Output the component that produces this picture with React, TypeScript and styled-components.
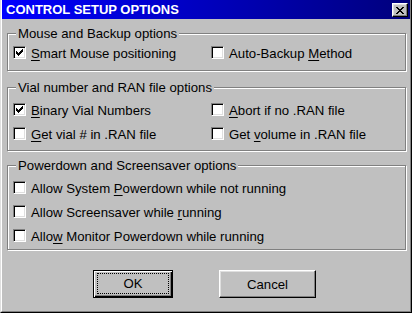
import React from 'react';
import styled, { createGlobalStyle, css } from 'styled-components';

const GlobalStyle = createGlobalStyle`
    html, body {
        margin: 0;
        padding: 0;
        background: #c0c0c0;
    }
    body {
        font-family: "Liberation Sans", Arial, sans-serif;
        font-size: 13.2px;
        color: #000;
    }
`;

const Window = styled.div`
    width: 412px;
    height: 313px;
    box-sizing: border-box;
    background: #c0c0c0;
    border-left: 1px solid #dfdfdf;
    border-right: 1px solid #000;
    border-bottom: 1px solid #000;
`;

const WindowInner = styled.div`
    height: 100%;
    box-sizing: border-box;
    border-left: 1px solid #fff;
    border-right: 1px solid #808080;
    border-bottom: 1px solid #808080;
    display: flex;
    flex-direction: column;
`;

const TitleBar = styled.div`
    height: 19px;
    flex: none;
    display: flex;
    align-items: flex-start;
    justify-content: space-between;
    padding-left: 4px;
    background: linear-gradient(to right, #0000ff, #00007c);
`;

const TitleText = styled.div`
    color: #fff;
    font-weight: bold;
    font-size: 13px;
    line-height: 19px;
`;

const CloseButton = styled.button`
    width: 16px;
    height: 14px;
    margin: 3px 2px 0 0;
    padding: 0;
    box-sizing: border-box;
    background: #c0c0c0;
    border: 1px solid;
    border-color: #fff #000 #000 #fff;
    box-shadow: inset -1px -1px #808080, inset 1px 1px #dfdfdf;
    display: flex;
    align-items: center;
    justify-content: center;

    svg {
        display: block;
    }
`;

const Body = styled.div`
    flex: 1;
    padding: 0 4px 0 5px;
    display: flex;
    flex-direction: column;
`;

const GroupBox = styled.div<{ $top: number }>`
    position: relative;
    margin-top: ${p => p.$top}px;
    border: 1px solid #808080;
    box-shadow: inset 1px 1px #fff, 1px 1px #fff;
`;

const GroupLabel = styled.span`
    position: absolute;
    top: -8px;
    left: 8px;
    padding: 0 2px;
    line-height: 15px;
    background: #c0c0c0;
`;

const GroupBody = styled.div<{ $top: number; $bottom: number }>`
    padding: ${p => p.$top}px 0 ${p => p.$bottom}px 5px;
    display: grid;
    grid-template-columns: 198px 1fr;
    row-gap: 9px;
`;

const SingleColumn = styled(GroupBody)`
    grid-template-columns: 1fr;
`;

const CheckRow = styled.label`
    display: flex;
    align-items: flex-start;
    gap: 5px;
    line-height: 15px;
    white-space: nowrap;
`;

const Box = styled.span`
    width: 13px;
    height: 13px;
    flex: none;
    box-sizing: border-box;
    background: #fff;
    border: 1px solid;
    border-color: #808080 #fff #fff #808080;
    box-shadow: inset 1px 1px #000, inset -1px -1px #dfdfdf;

    svg {
        display: block;
        margin: 2px;
    }
`;

const Key = styled.u`
    text-decoration: underline;
    text-underline-offset: 2px;
`;

const ButtonRow = styled.div`
    margin-top: 20px;
    padding-left: 86px;
    display: flex;
    gap: 46px;
`;

const Button = styled.button<{ $width: number; $default?: boolean }>`
    width: ${p => p.$width}px;
    height: 28px;
    padding: 0;
    box-sizing: border-box;
    font-family: "Liberation Sans", Arial, sans-serif;
    font-size: 13.2px;
    color: #000;
    background: #c0c0c0;
    border: 1px solid;
    border-color: #fff #000 #000 #fff;
    box-shadow: inset -1px -1px #808080, inset 1px 1px #dfdfdf;
    display: flex;
    align-items: stretch;

    ${p => p.$default && css`
        border-color: #000;
        box-shadow: inset 1px 1px #fff, inset -1px -1px #000, inset -2px -2px #808080;
        padding: 2px 3px 3px 3px;
    `}
`;

const ButtonFace = styled.span<{ $focus?: boolean }>`
    flex: 1;
    display: flex;
    align-items: center;
    justify-content: center;
    border: 1px dotted ${p => (p.$focus ? '#000' : 'transparent')};
`;

function CheckMark() {
    return (
        <svg width="7" height="7" viewBox="0 0 7 7" shapeRendering="crispEdges">
            <path
                fill="#000"
                d="M6 0h1v1h-1zM5 1h2v1h-2zM0 2h1v1h-1zM4 2h3v1h-3zM0 3h2v1h-2zM3 3h3v1h-3zM0 4h5v1h-5zM1 5h3v1h-3zM2 6h1v1h-1z"
            />
        </svg>
    );
}

function CloseGlyph() {
    return (
        <svg width="8" height="7" viewBox="0 0 8 7" shapeRendering="crispEdges">
            <path
                fill="#000"
                d="M0 0h2v1h-2zM6 0h2v1h-2zM1 1h2v1h-2zM5 1h2v1h-2zM2 2h4v1h-4zM3 3h2v1h-2zM2 4h4v1h-4zM1 5h2v1h-2zM5 5h2v1h-2zM0 6h2v1h-2zM6 6h2v1h-2z"
            />
        </svg>
    );
}

function Check({ checked, children }: { checked?: boolean; children: React.ReactNode }) {
    return (
        <CheckRow>
            <Box>{checked && <CheckMark />}</Box>
            <span>{children}</span>
        </CheckRow>
    );
}

export default function App() {
    return (
        <>
            <GlobalStyle />
            <Window>
                <WindowInner>
                    <TitleBar>
                        <TitleText>CONTROL SETUP OPTIONS</TitleText>
                        <CloseButton aria-label="Close">
                            <CloseGlyph />
                        </CloseButton>
                    </TitleBar>
                    <Body>
                        <GroupBox $top={14}>
                            <GroupLabel>Mouse and Backup options</GroupLabel>
                            <GroupBody $top={12} $bottom={9}>
                                <Check checked><Key>S</Key>mart Mouse positioning</Check>
                                <Check>Auto-Backup <Key>M</Key>ethod</Check>
                            </GroupBody>
                        </GroupBox>
                        <GroupBox $top={16}>
                            <GroupLabel>Vial number and RAN file options</GroupLabel>
                            <GroupBody $top={15} $bottom={8}>
                                <Check checked><Key>B</Key>inary Vial Numbers</Check>
                                <Check><Key>A</Key>bort if no .RAN file</Check>
                                <Check><Key>G</Key>et vial # in .RAN file</Check>
                                <Check>Get <Key>v</Key>olume in .RAN file</Check>
                            </GroupBody>
                        </GroupBox>
                        <GroupBox $top={14}>
                            <GroupLabel>Powerdown and Screensaver options</GroupLabel>
                            <SingleColumn $top={15} $bottom={5}>
                                <Check>Allow System <Key>P</Key>owerdown while not running</Check>
                                <Check>Allow Screensaver while <Key>r</Key>unning</Check>
                                <Check>Allo<Key>w</Key> Monitor Powerdown while running</Check>
                            </SingleColumn>
                        </GroupBox>
                        <ButtonRow>
                            <Button $width={80} $default>
                                <ButtonFace $focus>OK</ButtonFace>
                            </Button>
                            <Button $width={97}>
                                <ButtonFace>Cancel</ButtonFace>
                            </Button>
                        </ButtonRow>
                    </Body>
                </WindowInner>
            </Window>
        </>
    );
}
